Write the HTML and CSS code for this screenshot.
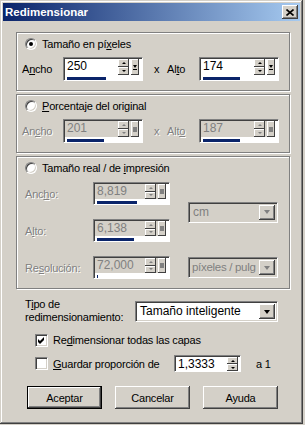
FILE: index.html
```html
<!DOCTYPE html>
<html lang="es">
<head>
  <meta charset="UTF-8">
  <title>Redimensionar</title>
  <link rel="stylesheet" href="styles.css">
</head>
<body>
  <div class="window">
    <div class="titlebar">
      <span class="title">Redimensionar</span>
      <span class="close">
        <svg width="8" height="7" viewBox="0 0 8 7"><path d="M0.5 0.5 L7.5 6.5 M7.5 0.5 L0.5 6.5" stroke="#000" stroke-width="1.6"/></svg>
      </span>
    </div>

    <div class="content">
      <!-- pixel size -->
      <div class="group g-small">
        <div class="radio-row"><span class="radio checked"></span><span>Tamaño en pí<u>x</u>eles</span></div>
        <div class="pair">
          <span class="lbl">A<u>n</u>cho</span>
          <div class="spin-edit">
            <div class="row"><span class="val">250</span><span class="spin"><i class="up"></i><i class="dn"></i></span><span class="drop"></span></div>
            <div class="bar"><div class="fill" style="width:54%"></div></div>
          </div>
          <span class="times">x</span>
          <span class="lbl lbl-alto">Al<u>t</u>o</span>
          <div class="spin-edit">
            <div class="row"><span class="val">174</span><span class="spin"><i class="up"></i><i class="dn"></i></span><span class="drop"></span></div>
            <div class="bar"><div class="fill" style="width:51%"></div></div>
          </div>
        </div>
      </div>

      <!-- percentage -->
      <div class="group g-small">
        <div class="radio-row"><span class="radio"></span><span><u>P</u>orcentaje del original</span></div>
        <div class="pair disabled">
          <span class="lbl dim">An<u>c</u>ho</span>
          <div class="spin-edit off">
            <div class="row"><span class="val">201</span><span class="spin"><i class="up"></i><i class="dn"></i></span><span class="drop"></span></div>
            <div class="bar"><div class="fill" style="width:52%"></div></div>
          </div>
          <span class="times dim">x</span>
          <span class="lbl lbl-alto dim">Alt<u>o</u></span>
          <div class="spin-edit off">
            <div class="row"><span class="val">187</span><span class="spin"><i class="up"></i><i class="dn"></i></span><span class="drop"></span></div>
            <div class="bar"><div class="fill" style="width:51%"></div></div>
          </div>
        </div>
      </div>

      <!-- print size -->
      <div class="group g-big">
        <div class="radio-row"><span class="radio"></span><span>Tamaño real / de <u>i</u>mpresión</span></div>
        <div class="print-grid">
          <span class="lbl dim r1">Anc<u>h</u>o:</span>
          <div class="spin-edit off narrow r1">
            <div class="row"><span class="val">8,819</span><span class="spin"><i class="up"></i><i class="dn"></i></span><span class="drop"></span></div>
            <div class="bar"><div class="fill" style="width:58%"></div></div>
          </div>
          <div class="select off unit">
            <span class="txt">cm</span><span class="btn-drop"></span>
          </div>
          <span class="lbl dim r2">A<u>l</u>to:</span>
          <div class="spin-edit off narrow r2">
            <div class="row"><span class="val">6,138</span><span class="spin"><i class="up"></i><i class="dn"></i></span><span class="drop"></span></div>
            <div class="bar"><div class="fill" style="width:54%"></div></div>
          </div>
          <span class="lbl dim r3">Re<u>s</u>olución:</span>
          <div class="spin-edit off narrow r3">
            <div class="row"><span class="val">72,000</span><span class="spin"><i class="up"></i><i class="dn"></i></span><span class="drop"></span></div>
            <div class="bar"><div class="fill" style="width:2%"></div></div>
          </div>
          <div class="select off res">
            <span class="txt tight">píxeles / pulg</span><span class="btn-drop"></span>
          </div>
        </div>
      </div>

      <div class="type-row">
        <span class="type-lbl">T<u>i</u>po de<br>redimensionamiento:</span>
        <div class="select type">
          <span class="txt">Tamaño inteligente</span><span class="btn-drop"></span>
        </div>
      </div>

      <div class="check-row">
        <span class="check">
          <svg width="7" height="7" viewBox="0 0 7 7"><path d="M0 2 L2 4 L6 0 L6 3 L2 7 L0 5 Z" fill="#000"/></svg>
        </span>
        <span>Re<u>d</u>imensionar todas las capas</span>
      </div>

      <div class="check-row ratio">
        <span class="check"></span>
        <span class="ratio-lbl"><u>G</u>uardar proporción de</span>
        <div class="num-edit">
          <span class="val">1,3333</span>
          <span class="spin"><i class="up"></i><i class="dn"></i></span>
        </div>
        <span class="a1">a 1</span>
      </div>

      <div class="buttons">
        <button class="btn default">Aceptar</button>
        <button class="btn">Cancelar</button>
        <button class="btn">Ayuda</button>
      </div>
    </div>
  </div>
</body>
</html>
```

FILE: styles.css
```css
/* classic dialog look */
body {
  margin: 0;
  background: #d4d0c8;
  font-family: "Liberation Sans", Arial, sans-serif;
  font-size: 11px;
  letter-spacing: -0.2px;
  color: #000;
}
u {
  text-decoration: underline;
  text-underline-offset: 1px;
}
.window {
  width: 303px;
  height: 424px;
  box-sizing: border-box;
  padding: 3px;
  background: #d4d0c8;
  box-shadow: inset -1px -1px #404040, inset 1px 1px #d4d0c8,
              inset -2px -2px #808080, inset 2px 2px #fff;
}
.titlebar {
  height: 18px;
  display: flex;
  align-items: center;
  justify-content: space-between;
  padding: 0 2px;
  background: linear-gradient(90deg, #0a246a, #a6caf0);
}
.title {
  color: #fff;
  font-weight: bold;
  font-size: 11.5px;
  letter-spacing: 0;
}
.close {
  width: 16px;
  height: 14px;
  display: flex;
  align-items: center;
  justify-content: center;
  background: #d4d0c8;
  box-shadow: inset -1px -1px #404040, inset 1px 1px #fff, inset -2px -2px #808080;
}

.content {
  padding: 11px 10px 0 13px;
}

/* group boxes */
.group {
  box-sizing: border-box;
  border: 1px solid #808080;
  box-shadow: inset 1px 1px #fff, 1px 1px #fff;
  padding: 4px 0 0 5px;
  margin-bottom: 3px;
}
.g-small { height: 59px; }
.g-big { height: 133px; padding-left: 8px; }
.radio-row {
  display: flex;
  align-items: center;
  gap: 5px;
  height: 13px;
  margin-left: 3px;
}
.g-big .radio-row { margin-left: 0; }
.radio {
  width: 12px;
  height: 12px;
  box-sizing: border-box;
  border-radius: 50%;
  background: #fff;
  border: 1px solid;
  border-color: #808080 #fff #fff #808080;
  box-shadow: inset 1px 1px #404040, inset -1px -1px #d4d0c8;
  display: flex;
  align-items: center;
  justify-content: center;
}
.radio.checked::after {
  content: "";
  width: 4px;
  height: 4px;
  border-radius: 50%;
  background: #000;
}

.pair {
  display: flex;
  align-items: center;
  margin-top: 7px;
}
.lbl { width: 41px; }
.times { width: 7px; margin-left: 11px; }
.lbl-alto { width: 32px; margin-left: 6px; }
.dim {
  color: #808080;
  text-shadow: 1px 1px #fff;
}

/* edit field with spin, menu button and bar */
.spin-edit {
  width: 80px;
  height: 24px;
  box-sizing: border-box;
  background: #fff;
  border: 1px solid;
  border-color: #808080 #fff #fff #808080;
  box-shadow: inset 1px 1px #404040;
  padding: 1px 3px 0 1px;
  display: flex;
  flex-direction: column;
}
.spin-edit .row {
  display: flex;
  height: 16px;
}
.val {
  flex: 1;
  font-size: 12px;
  letter-spacing: 0;
  line-height: 14px;
  padding-left: 2px;
}
.spin {
  width: 11px;
  display: flex;
  flex-direction: column;
}
.spin i {
  flex: 1;
  display: flex;
  align-items: center;
  justify-content: center;
  background: #d4d0c8;
  box-shadow: inset -1px -1px #404040, inset 1px 1px #fff;
}
.spin i::after {
  content: "";
  border-left: 2px solid transparent;
  border-right: 2px solid transparent;
}
.spin .up::after { border-bottom: 2px solid #000; }
.spin .dn::after { border-top: 2px solid #000; }
.drop {
  width: 8px;
  margin-left: 2px;
  background: #d4d0c8;
  box-shadow: inset -1px -1px #404040, inset 1px 1px #fff;
  display: flex;
  flex-direction: column;
  align-items: center;
  justify-content: center;
  gap: 1px;
}
.drop::before {
  content: "";
  border-left: 2px solid transparent;
  border-right: 2px solid transparent;
  border-top: 3px solid #000;
}
.drop::after {
  content: "";
  width: 4px;
  height: 1px;
  background: #000;
}
.bar {
  height: 3px;
  margin-top: 2px;
  margin-left: 2px;
}
.bar .fill {
  height: 100%;
  background: #0a246a;
}
.off .row { background: #d4d0c8; }
.off .val { color: #808080; }
.off .spin .up::after { border-bottom-color: #808080; }
.off .spin .dn::after { border-top-color: #808080; }
.off .drop::before {
  border: none;
  width: 4px;
  height: 5px;
  background: #808080;
}
.off .drop::after { display: none; }

/* print size grid */
.print-grid {
  display: grid;
  grid-template-columns: 68px 77px 18px 90px;
  grid-template-rows: 23px 23px 23px;
  row-gap: 14px;
  align-items: center;
  margin-top: 8px;
}
.narrow { width: 77px; height: 23px; }
.r1 { grid-row: 1; }
.r2 { grid-row: 2; }
.r3 { grid-row: 3; }
.unit { grid-column: 4; grid-row: 1 / 3; }
.res { grid-column: 4; grid-row: 3; }

/* drop-down list */
.select {
  height: 21px;
  box-sizing: border-box;
  display: flex;
  background: #fff;
  border: 1px solid;
  border-color: #808080 #fff #fff #808080;
  box-shadow: inset 1px 1px #404040, inset -1px -1px #d4d0c8;
  padding: 2px;
  overflow: hidden;
}
.select .txt {
  flex: 1;
  min-width: 0;
  white-space: nowrap;
  font-size: 12px;
  letter-spacing: 0;
  line-height: 15px;
  padding-left: 2px;
}
.select .txt.tight {
  font-size: 11.5px;
  letter-spacing: -0.3px;
  padding-left: 1px;
}
.btn-drop {
  width: 16px;
  flex: none;
  background: #d4d0c8;
  box-shadow: inset -1px -1px #404040, inset 1px 1px #fff, inset -2px -2px #808080;
  display: flex;
  align-items: center;
  justify-content: center;
}
.btn-drop::after {
  content: "";
  border-left: 3.5px solid transparent;
  border-right: 3.5px solid transparent;
  border-top: 4px solid #000;
}
.select.off { background: #d4d0c8; }
.select.off .txt { color: #808080; }
.select.off .btn-drop::after { border-top-color: #808080; }

/* lower part */
.type-row {
  display: flex;
  margin-top: 9px;
  padding-left: 9px;
}
.type-lbl {
  width: 110px;
  line-height: 13px;
}
.select.type {
  width: 143px;
  margin-top: 3px;
}
.check-row {
  display: flex;
  align-items: center;
  gap: 5px;
  margin-left: 19px;
  margin-top: 9px;
  height: 14px;
}
.check-row.ratio {
  margin-top: 8px;
  height: 17px;
}
.check {
  width: 13px;
  height: 13px;
  box-sizing: border-box;
  background: #fff;
  border: 1px solid;
  border-color: #808080 #fff #fff #808080;
  box-shadow: inset 1px 1px #404040, inset -1px -1px #d4d0c8;
  display: flex;
  align-items: center;
  justify-content: center;
}
.ratio-lbl { width: 116px; }
.num-edit {
  width: 67px;
  height: 17px;
  box-sizing: border-box;
  display: flex;
  background: #fff;
  border: 1px solid;
  border-color: #808080 #fff #fff #808080;
  box-shadow: inset 1px 1px #404040;
  padding: 1px 2px 0 1px;
}
.num-edit .val { line-height: 14px; }
.a1 { margin-left: 10px; }

.buttons {
  display: flex;
  gap: 13px;
  margin-top: 14px;
  padding-left: 11px;
}
.btn {
  width: 75px;
  height: 23px;
  box-sizing: border-box;
  padding: 0;
  font-family: inherit;
  font-size: 11px;
  letter-spacing: -0.2px;
  color: #000;
  background: #d4d0c8;
  border: none;
  box-shadow: inset -1px -1px #404040, inset 1px 1px #fff, inset -2px -2px #808080;
}
.btn.default {
  border: 1px solid #000;
}
```
